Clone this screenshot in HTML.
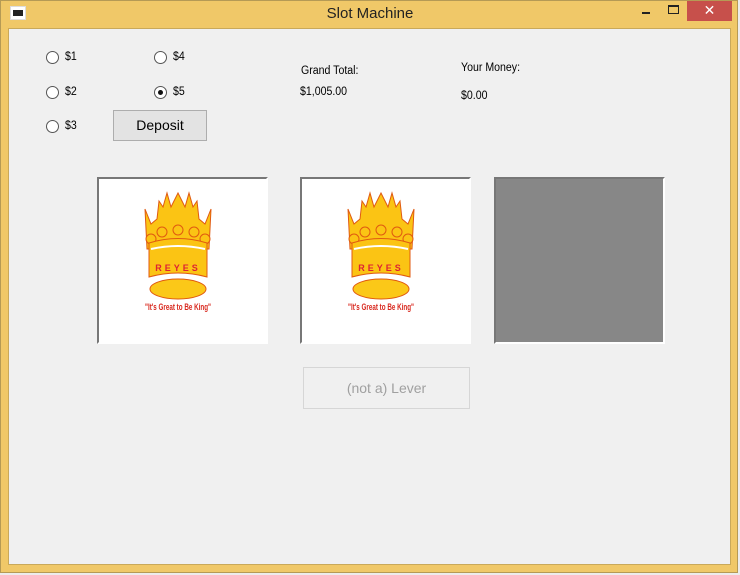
<!DOCTYPE html>
<html><head><meta charset="utf-8"><style>
*{margin:0;padding:0;box-sizing:border-box}
body{width:740px;height:575px;background:#ececec;position:relative;overflow:hidden;font-family:"Liberation Sans",Arial,sans-serif;font-size:12px;color:#000}
.win{position:absolute;left:0;top:0;width:738px;height:573px;background:#f0c868;border:1px solid #b59a55}
.client{position:absolute;left:8px;top:28px;width:723px;height:537px;background:#f0f0f0;border:1px solid #c9a95a}
.title{position:absolute;left:0;top:4px;width:738px;text-align:center;font-size:15px;color:#222}
.ico{position:absolute;left:9px;top:5px;width:16px;height:14px;background:#fff;border:1px solid #ddd}
.ico:after{content:"";position:absolute;left:2px;top:3px;width:10px;height:6px;background:#222}
.close{position:absolute;left:686px;top:0;width:45px;height:20px;background:#c7504b;color:#fff;text-align:center;font-size:14px;line-height:19px}
.minb{position:absolute;left:641px;top:11px;width:8px;height:2px;background:#222}
.maxb{position:absolute;left:667px;top:4px;width:11px;height:9px;border:1px solid #222;border-top-width:2px}
.t{position:absolute;font-size:11.5px;transform:scaleX(.92);transform-origin:left}
.r{position:absolute;width:13px;height:13px;border-radius:50%;border:1px solid #555;background:#fff}
.r.on:after{content:"";position:absolute;left:3px;top:3px;width:5px;height:5px;border-radius:50%;background:#111}
.btn{position:absolute;background:#e3e3e3;border:1px solid #adadad;text-align:center;font-size:14px}
.box{position:absolute;width:171px;height:167px;background:#fff;border:2px solid #fff;border-left-color:#777;border-top-color:#777}
.gray{background:#878787}
</style></head><body>
<div class="win">
<div class="ico"></div>
<div class="title">Slot Machine</div>
<div class="minb"></div><div class="maxb"></div>
<div class="close">✕</div>
</div>
<div class="client"></div>
<div class="r" style="left:46px;top:51px"></div><div class="t" style="left:65px;top:51px">$1</div>
<div class="r" style="left:46px;top:86px"></div><div class="t" style="left:65px;top:86px">$2</div>
<div class="r" style="left:46px;top:120px"></div><div class="t" style="left:65px;top:120px">$3</div>
<div class="r" style="left:154px;top:51px"></div><div class="t" style="left:173px;top:51px">$4</div>
<div class="r on" style="left:154px;top:86px"></div><div class="t" style="left:173px;top:86px">$5</div>
<div class="btn" style="left:113px;top:110px;width:94px;height:31px;line-height:29px">Deposit</div>
<div class="t" style="left:301px;top:65px">Grand Total:</div>
<div class="t" style="left:300px;top:86px">$1,005.00</div>
<div class="t" style="left:461px;top:62px">Your Money:</div>
<div class="t" style="left:461px;top:90px">$0.00</div>

<div class="box" style="left:97px;top:177px"><svg width="167" height="163" viewBox="0 0 167 163">
<g id="cr" stroke="#e05a10" stroke-width="1" fill="#fbc414">
<path d="M46 30 L52 45 L58 40 L60 22 L64 28 L68 14 L72 28 L79 14 L86 28 L90 14 L94 28 L98 22 L100 40 L106 45 L112 30 L110 70 L48 70 Z"/>
<circle cx="63" cy="53" r="5"/><circle cx="79" cy="51" r="5"/><circle cx="95" cy="53" r="5"/>
<circle cx="52" cy="60" r="5"/><circle cx="106" cy="60" r="5"/>
<path d="M50 64 Q79 55 108 64 L108 98 Q79 90 50 98 Z"/>
<path d="M52 70 Q79 64 106 70" fill="none" stroke="#fff" stroke-width="2"/>
<ellipse cx="79" cy="110" rx="28" ry="10" fill="#fbc818"/>
</g>
<text x="79" y="92" text-anchor="middle" font-size="9" fill="#d23" font-weight="bold" letter-spacing="3">REYES</text>
<text x="79" y="131" text-anchor="middle" font-size="9.5" font-weight="bold" fill="#d8261c" textLength="66" lengthAdjust="spacingAndGlyphs">"It's Great to Be King"</text>
</svg></div>
<div class="box" style="left:300px;top:177px"><svg width="167" height="163" viewBox="0 0 167 163"><use href="#cr"/>
<text x="79" y="92" text-anchor="middle" font-size="9" fill="#d23" font-weight="bold" letter-spacing="3">REYES</text>
<text x="79" y="131" text-anchor="middle" font-size="9.5" font-weight="bold" fill="#d8261c" textLength="66" lengthAdjust="spacingAndGlyphs">"It's Great to Be King"</text>
</svg></div>
<div class="box gray" style="left:494px;top:177px"></div>
<div class="btn" style="left:303px;top:367px;width:167px;height:42px;line-height:40px;background:#f0f0f0;border-color:#d6d6d6;color:#a0a0a0">(not a) Lever</div>
</body></html>
